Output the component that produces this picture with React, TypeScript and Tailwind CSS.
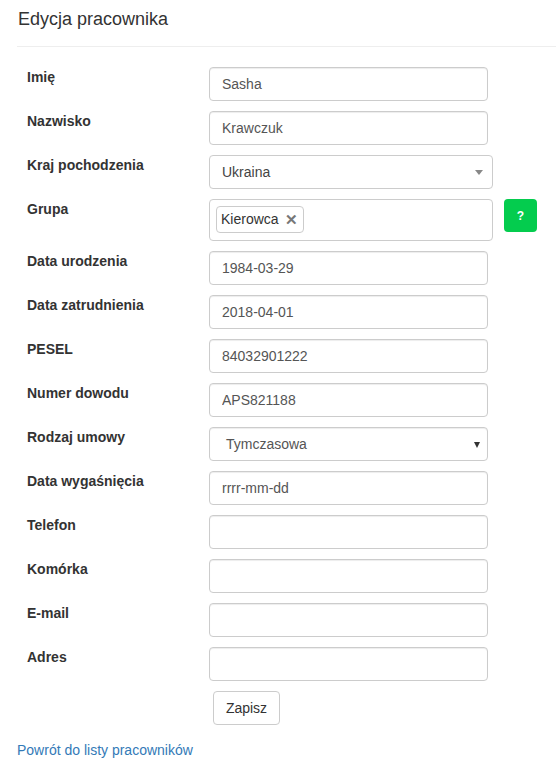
import React from "react";

const inputCls =
  "block w-[279px] h-[34px] px-[12px] py-[6px] border border-[#ccc] rounded-[4px] bg-white text-[14px] text-[#555] shadow-[inset_0_1px_1px_rgba(0,0,0,0.075)] outline-none font-['Liberation_Sans',Arial,sans-serif]";

function Row({ label, children }: { label: string; children: React.ReactNode }) {
  return (
    <div className="flex items-start mb-[10px]">
      <div className="w-[192px] shrink-0 pl-[10px] text-[14px] leading-[20px] font-bold text-[#333]">{label}</div>
      {children}
    </div>
  );
}

function TextRow({ label, value }: { label: string; value?: string }) {
  return (
    <Row label={label}>
      <input className={inputCls} defaultValue={value ?? ""} readOnly />
    </Row>
  );
}

export default function App() {
  return (
    <div className="bg-white min-h-[771px] pl-[17px] font-['Liberation_Sans',Arial,sans-serif] text-[#333]">
      <h1 className="pt-[9px] pl-[1px] text-[18px] leading-[20px] font-normal text-[#333]">Edycja pracownika</h1>
      <div className="mt-[17px] mb-[20px] border-t border-[#eee]" />
      <div>
        <TextRow label="Imię" value="Sasha" />
        <TextRow label="Nazwisko" value="Krawczuk" />
        <Row label="Kraj pochodzenia">
          <div className="relative w-[284px] h-[34px] border border-[#ccc] rounded-[4px] bg-white flex items-center pl-[12px] text-[14px] text-[#444]">
            Ukraina
            <span className="absolute right-[9px] top-[14px] w-0 h-0 border-l-[4px] border-r-[4px] border-t-[5px] border-l-transparent border-r-transparent border-t-[#888]" />
          </div>
        </Row>
        <div className="flex items-start mb-[10px]">
          <div className="w-[192px] shrink-0 pl-[10px] text-[14px] leading-[20px] font-bold text-[#333]">Grupa</div>
          <div className="w-[284px] h-[42px] border border-[#ccc] rounded-[4px] bg-white flex items-start pl-[6px] pt-[6px]">
            <div className="h-[27px] w-[88px] border border-[#ccc] rounded-[4px] bg-white flex items-center pl-[4px] text-[14px] text-[#333]">
              Kierowca
              <span className="ml-[6px] text-[15px] font-bold text-[#777] leading-none">✕</span>
            </div>
          </div>
          <button className="ml-[11px] w-[33px] h-[33px] rounded-[4px] bg-[#04cc4e] text-white text-[12px] font-bold flex items-center justify-center">
            ?
          </button>
        </div>
        <TextRow label="Data urodzenia" value="1984-03-29" />
        <TextRow label="Data zatrudnienia" value="2018-04-01" />
        <TextRow label="PESEL" value="84032901222" />
        <TextRow label="Numer dowodu" value="APS821188" />
        <Row label="Rodzaj umowy">
          <div className="relative w-[279px] h-[34px] border border-[#ccc] rounded-[4px] bg-white flex items-center pl-[16px] text-[14px] text-[#555] shadow-[inset_0_1px_1px_rgba(0,0,0,0.075)]">
            Tymczasowa
            <span className="absolute right-[7px] top-[14px] w-0 h-0 border-l-[3px] border-r-[3px] border-t-[6px] border-l-transparent border-r-transparent border-t-[#333]" />
          </div>
        </Row>
        <TextRow label="Data wygaśnięcia" value="rrrr-mm-dd" />
        <TextRow label="Telefon" />
        <TextRow label="Komórka" />
        <TextRow label="E-mail" />
        <TextRow label="Adres" />
        <div className="flex">
          <div className="w-[196px] shrink-0" />
          <button className="h-[34px] w-[67px] border border-[#ccc] rounded-[4px] bg-white text-[14px] text-[#333]">Zapisz</button>
        </div>
      </div>
      <div className="mt-[13px]">
        <a className="text-[14px] text-[#337ab7]">Powrót do listy pracowników</a>
      </div>
    </div>
  );
}
